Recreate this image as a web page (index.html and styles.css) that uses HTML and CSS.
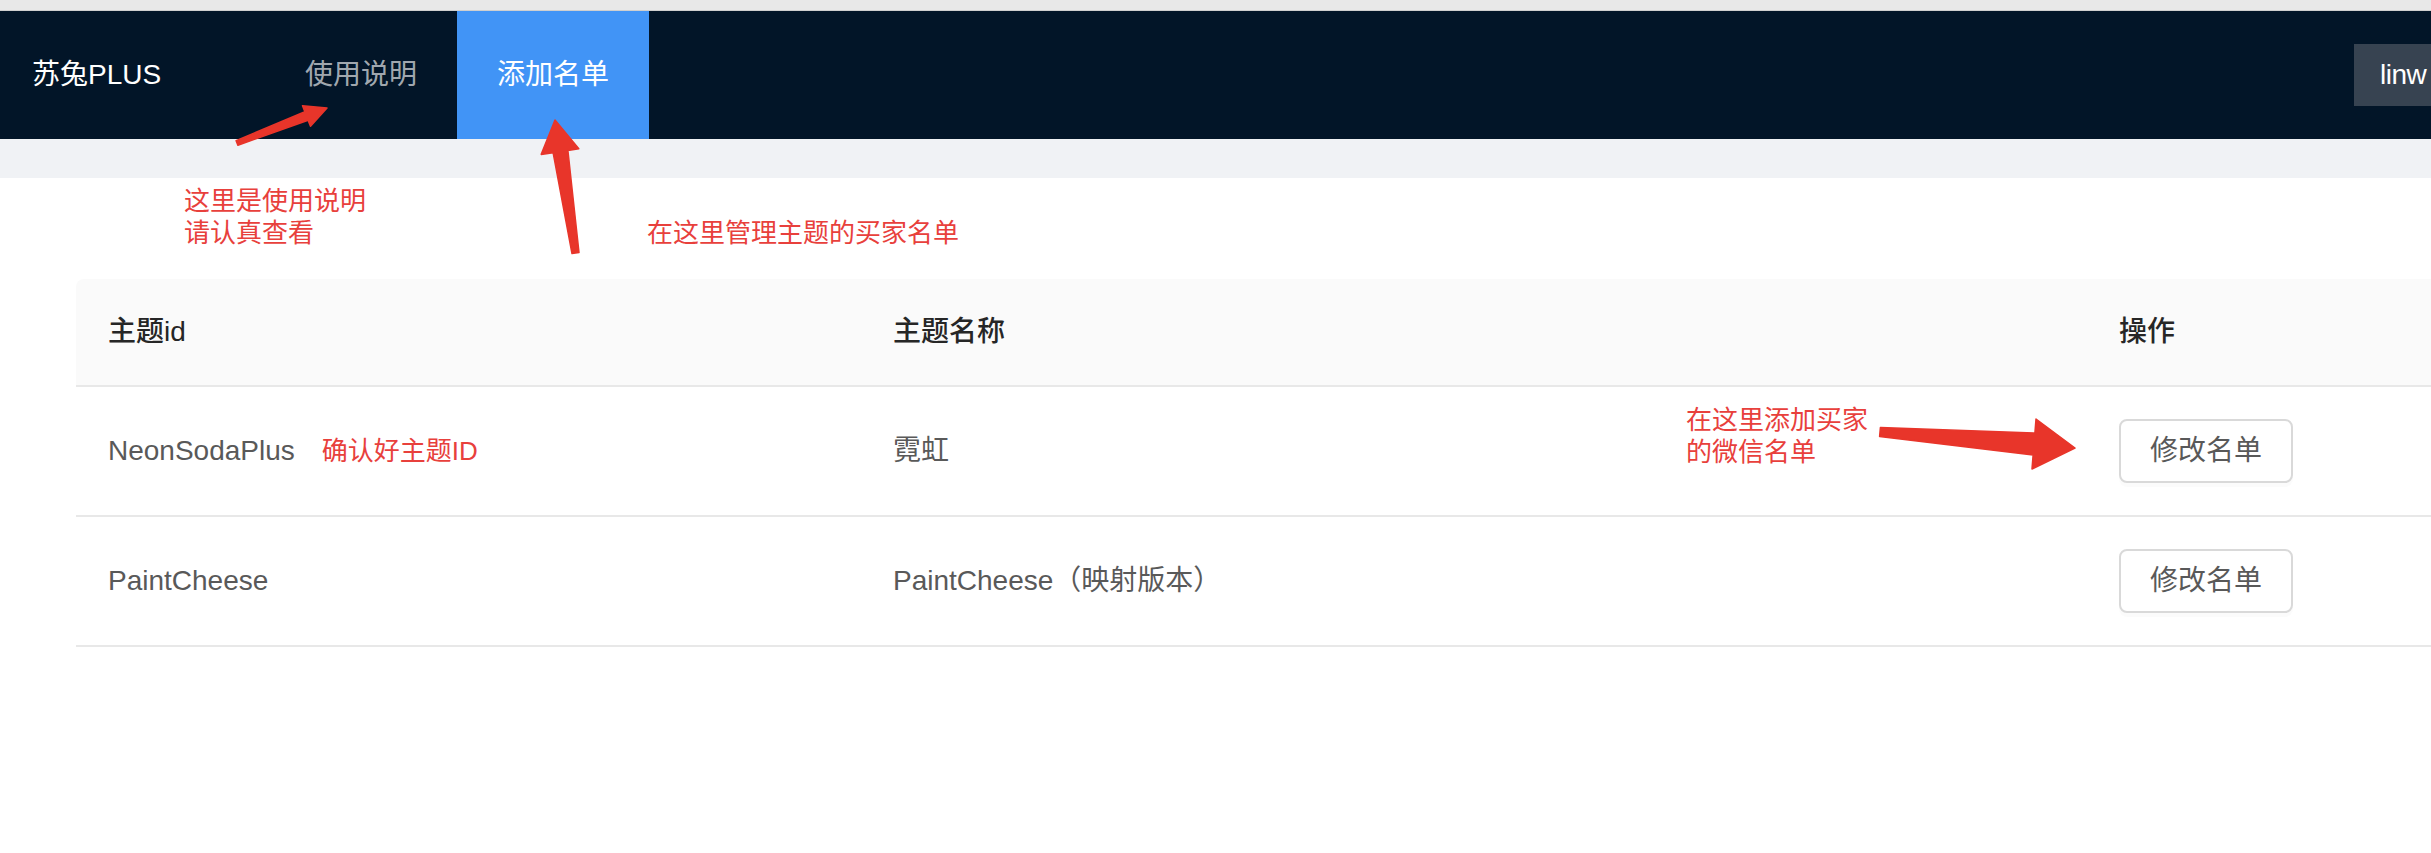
FILE: index.html
```html
<!DOCTYPE html>
<html lang="zh-CN">
<head>
<meta charset="utf-8">
<title>苏兔PLUS - 添加名单</title>
<link rel="stylesheet" href="styles.css">
</head>
<body>
<div class="page">
  <div class="chrome"></div>
  <header class="header">
    <div class="logo">苏兔PLUS</div>
    <nav class="menu">
      <a class="menu-item">使用说明</a>
      <a class="menu-item active">添加名单</a>
    </nav>
    <div class="user">linw</div>
  </header>
  <div class="strip"></div>
  <main class="content">
    <div class="notes">
      <div class="note note-help">这里是使用说明<br>请认真查看</div>
      <div class="note note-manage">在这里管理主题的买家名单</div>
    </div>
    <table class="table">
      <colgroup>
        <col class="col-id">
        <col class="col-name">
        <col class="col-op">
      </colgroup>
      <thead>
        <tr>
          <th class="th-first">主题id</th>
          <th>主题名称</th>
          <th>操作</th>
        </tr>
      </thead>
      <tbody>
        <tr>
          <td>NeonSodaPlus<span class="note note-inline">确认好主题ID</span></td>
          <td class="cell-rel">霓虹<div class="note note-add">在这里添加买家<br>的微信名单</div></td>
          <td><button class="btn">修改名单</button></td>
        </tr>
        <tr>
          <td>PaintCheese</td>
          <td>PaintCheese（映射版本）</td>
          <td><button class="btn">修改名单</button></td>
        </tr>
      </tbody>
    </table>
  </main>
  <svg class="arrows" width="2431" height="853" viewBox="0 0 2431 853" xmlns="http://www.w3.org/2000/svg">
    <polygon fill="#e8352a" stroke="#e8352a" stroke-width="1.5" stroke-linejoin="round"
      points="236.1,140.7 304.9,111.8 302.5,105.7 327,108 310.5,126.3 308.1,120.2 237.9,145.3"/>
    <polygon fill="#e8352a" stroke="#e8352a" stroke-width="1.5" stroke-linejoin="round"
      points="579,252.5 567.9,150.5 578.8,148.8 555,120 541.2,154.4 553.1,152.7 572,253.5"/>
    <polygon fill="#e8352a" stroke="#e8352a" stroke-width="1.5" stroke-linejoin="round"
      points="1880.4,427.5 2034.9,433 2036,419 2075,448 2032,469 2033.1,455 1879.6,436.5"/>
  </svg>
</div>
</body>
</html>
```

FILE: styles.css
```css
html, body {
  margin: 0;
  padding: 0;
  background: #ffffff;
  overflow: hidden;
}

.page {
  position: relative;
  width: 2431px;
  height: 853px;
  overflow: hidden;
  font-family: "Liberation Sans", "Noto Sans CJK SC", sans-serif;
  font-size: 28px;
}

.chrome {
  height: 10px;
  background: #e8e8e8;
  border-bottom: 1px solid #cfcfcf;
}

.header {
  display: flex;
  align-items: center;
  height: 128px;
  background: #021528;
}

.logo {
  flex: none;
  width: 233px;
  padding-left: 32px;
  color: #ffffff;
  line-height: 128px;
  white-space: nowrap;
}

.menu {
  display: flex;
  height: 128px;
}

.menu-item {
  display: block;
  padding: 0 40px;
  line-height: 128px;
  color: rgba(255, 255, 255, 0.65);
  white-space: nowrap;
}

.menu-item.active {
  background: #4194f6;
  color: #ffffff;
}

.user {
  margin-left: auto;
  flex: none;
  box-sizing: border-box;
  width: 77px;
  height: 62px;
  padding-left: 26px;
  line-height: 62px;
  background: #374351;
  color: #ffffff;
  white-space: nowrap;
  letter-spacing: -0.5px;
}

.strip {
  height: 39px;
  background: #f0f2f5;
}

.content {
  background: #ffffff;
}

.notes {
  display: flex;
  box-sizing: border-box;
  height: 101px;
  padding-top: 7px;
  padding-left: 184px;
}

.note {
  color: #e8403c;
  font-size: 26px;
  line-height: 32px;
  white-space: nowrap;
}

.note-manage {
  margin-left: 281px;
  margin-top: 32px;
}

.note-inline {
  margin-left: 27px;
}

.table {
  margin-left: 76px;
  width: 2511px;
  table-layout: fixed;
  border-collapse: separate;
  border-spacing: 0;
}

.col-id { width: 785px; }
.col-name { width: 1226px; }
.col-op { width: 500px; }

.table th {
  background: #fafafa;
  padding: 32px;
  line-height: 42px;
  font-weight: 500;
  color: #262626;
  text-align: left;
  border-bottom: 2px solid #e8e8e8;
}

.table .th-first {
  border-top-left-radius: 8px;
}

.table td {
  padding: 32px;
  line-height: 42px;
  color: #595959;
  border-bottom: 2px solid #e8e8e8;
  vertical-align: middle;
  white-space: nowrap;
}

.table td.cell-rel {
  position: relative;
}

.note-add {
  position: absolute;
  left: 825px;
  top: 17px;
}

.btn {
  display: block;
  box-sizing: border-box;
  height: 64px;
  padding: 0 29px;
  border: 2px solid #d9d9d9;
  border-radius: 8px;
  background: #ffffff;
  color: #595959;
  font-family: inherit;
  font-size: 28px;
  line-height: 60px;
  box-shadow: 0 4px 0 rgba(0, 0, 0, 0.015);
}

.arrows {
  position: absolute;
  left: 0;
  top: 0;
  pointer-events: none;
}
```
